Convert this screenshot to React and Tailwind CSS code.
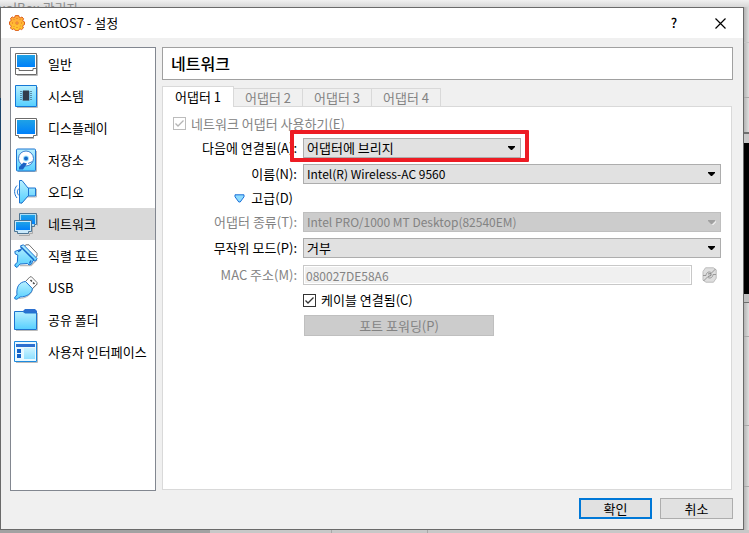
import { useState } from "react";

const FONT = "font-['Noto_Sans_CJK_KR',sans-serif]";

const Gradients = () => (
  <svg width="0" height="0" className="absolute" aria-hidden="true">
    <defs>
      <linearGradient id="screen" x1="0" y1="0" x2="0" y2="1">
        <stop offset="0" stopColor="#1fa2e6" />
        <stop offset="1" stopColor="#0080fa" />
      </linearGradient>
      <linearGradient id="ice" x1="0" y1="0" x2="0" y2="1">
        <stop offset="0" stopColor="#b9f0ff" />
        <stop offset="1" stopColor="#55cfff" />
      </linearGradient>
      <linearGradient id="gear" x1="0" y1="0" x2="0" y2="1">
        <stop offset="0" stopColor="#ffa53c" />
        <stop offset="1" stopColor="#ffcb2e" />
      </linearGradient>
    </defs>
  </svg>
);

const Icon = ({ children }) => (
  <svg width="24" height="24" viewBox="0 0 24 24" fill="none" className="shrink-0" aria-hidden="true">
    {children}
  </svg>
);

const GeneralIcon = () => (
  <Icon>
    <path d="M3 23.500h20.500V3" stroke="#bbb" />
    <path d="M1.500 1.500h21v21h-21z" fill="#fff" stroke="#6b6b6b" />
    <path d="M3 3h18v12H3z" fill="url(#screen)" />
    <path d="M2 16.500h3v2h14v-2h3" stroke="#6b6b6b" />
  </Icon>
);

const SystemIcon = () => (
  <Icon>
    <path d="M3 23.500h20.500V3" stroke="#bbb" />
    <path d="M1.500 1.500h21v21h-21z" fill="url(#ice)" stroke="#1478d6" />
    <path d="M6 7.500h12M6 9.500h12M6 11.500h12M6 13.500h12M6 15.500h12" stroke="#5a8ca8" />
    <path d="M8 7h8v10H8z" fill="#6fb4d8" />
    <path d="M9 6.500h6v10H9z" fill="#323c4b" />
  </Icon>
);

const DisplayIcon = () => (
  <Icon>
    <path d="M5 22.500h15M23.500 4v16" stroke="#bbb" />
    <path d="M1.500 2.500h21v17h-3v2h-15v-2h-3z" fill="#fff" stroke="#6b6b6b" />
    <path d="M3 4h18v14H3z" fill="url(#screen)" />
  </Icon>
);

const StorageIcon = () => (
  <Icon>
    <path d="M4 23.500h18.500V3" stroke="#bbb" />
    <rect x="2.500" y="1" width="19" height="22" rx="1" fill="url(#ice)" stroke="#1d74d0" />
    <circle cx="12" cy="10.500" r="7.500" fill="#fff" stroke="#3a7fd0" />
    <circle cx="12" cy="10.500" r="3" fill="#9fe3ff" />
    <circle cx="12" cy="10.500" r="2" fill="#1668c8" />
    <path d="M13 15.500l-3.500-1-4.500 4.500v2.500h4z" fill="#1a62c4" />
    <path d="M14 15.500l4.500-2" stroke="#3a7fd0" />
  </Icon>
);

const AudioIcon = () => (
  <Icon>
    <path d="M7 24l6-7h9.500v-8" stroke="#bbb" />
    <path d="M5.500 .5h2.500l6 7.500h7.500v8h-7.500l-6 7H5.500z" fill="url(#ice)" stroke="#1d74d0" />
    <path d="M14.500 8v8" stroke="#1d74d0" />
    <path d="M3 5.500C-.2 9-.2 14 3 18M5 8.500c-2.200 2-2.200 5 0 7" stroke="#1d74d0" />
  </Icon>
);

const NetworkIcon = () => (
  <Icon>
    <path d="M23.500 3v10.500M18.500 12v9.500h-3v2H5" stroke="#aaa" />
    <path d="M5.500 1.500h17v11h-2v2h-13v-2h-2z" fill="#a9def8" stroke="#4d7594" />
    <path d="M7 3h14v9H7z" fill="url(#screen)" />
    <path d="M.5 8.500h17v11h-3v2h-11v-2h-3z" fill="#c9e9fb" stroke="#4d7594" />
    <path d="M2 10h14v8H2z" fill="url(#screen)" />
  </Icon>
);

const SerialIcon = () => (
  <Icon>
    <path d="M6 21.500h11l6-6" stroke="#bbb" strokeWidth="1.500" />
    <path d="M10 2.500L12 .8h3l8 8.500v3L21 14z" fill="#fff" stroke="#777" />
    <path
      d="M6.500 1.800L9.500.8 23 14.500l-1.500 2.500-2.500-.5-1.500 3.500-2.500 1-1.500-1.500-7.500.5-3 3.500L.8 22l.5-2 2-1.500.5-7.500-2.500-1L.8 7.500l4-1.500 2.700-.5z"
      fill="url(#ice)" stroke="#1d74d0"
    />
    <path d="M7 3l13 13M4 7.500l3-1.500M15.500 19.500l1.500-3" stroke="#1668c8" strokeWidth="1.500" />
  </Icon>
);

const UsbIcon = () => (
  <Icon>
    <path d="M5 22.500c7 0 13-4 13.500-9.500l5-5" stroke="#bbb" />
    <path d="M11.500 5.500L16 .8h1.500L23 6.500V8l-5 5z" fill="#fff" stroke="#777" />
    <path d="M16.500 4L18 5.500M19 6.500L20.500 8" stroke="#444" strokeWidth="1.500" />
    <path
      d="M11.500 5.500l6.800 7c0 4.500-5.300 8.500-12.300 8.500l-3.200 2.300-2-.5V21L3 19C2 10.500 5.500 6 11.500 5.500z"
      fill="url(#ice)" stroke="#1d74d0"
    />
  </Icon>
);

const FolderIcon = () => (
  <Icon>
    <path d="M2 22.500h21.500V5" stroke="#bbb" />
    <path d="M9 5V3l2-2h10l2 2v2z" fill="#2b70d0" />
    <path d="M.5 3.500H9l2 1.500h11.500v16.500H.5z" fill="url(#ice)" stroke="#1d74d0" />
  </Icon>
);

const InterfaceIcon = () => (
  <Icon>
    <path d="M2 22.500h21.500V3" stroke="#bbb" />
    <path d="M.5 1.500h22v20H.5z" fill="#e8f9ff" stroke="#1d8adf" />
    <path d="M2 4h19v3H2z" fill="#2b70d0" />
    <path d="M3 9h4v4H3zM3 14h4v4H3z" fill="#1262c8" />
    <path d="M10 8h11v11H10z" fill="url(#ice)" opacity=".6" />
  </Icon>
);

const GearIcon = () => (
  <svg width="16" height="16" viewBox="0 0 16 16" aria-hidden="true">
    <path
      d="M6.300 .6h3.400l.6 1.700 1 .4 1.700-.7 1.600 1.700-.8 1.700.4.900 1.300.6v2.700l-1.400.7-.4.900.7 1.800-1.800 1.600-1.500-.7-1 .4-.6 1.300H6.300l-.6-1.300-1-.4-1.600.7L1.500 13l.7-1.700-.4-1L.5 9.600V6.800l1.300-.7.4-1L1.500 3.500l1.700-1.600 1.500.8 1-.4z"
      fill="url(#gear)" stroke="#dd5f1c"
    />
    <circle cx="8" cy="8" r="1.500" fill="#e0601c" />
    <circle cx="8" cy="8" r=".7" fill="#ffd98a" />
    <path
      d="M7.500 3.500h1M7.500 12.500h1M3.500 7.500v1M12.500 7.500v1M4.500 5l.7-.7M11.500 5l-.7-.7M4.500 11l.7.7M11.500 11l-.7.7"
      stroke="#e8701c" fill="none"
    />
  </svg>
);

const RefreshIcon = () => (
  <svg width="15" height="16" viewBox="0 0 15 16" fill="none" aria-hidden="true">
    <path d="M3.500 .8h8l2.700 2v8.400l-2.700 4H4l-3-2V4.500z" fill="#dedede" stroke="#bcbcbc" />
    <path d="M1 8.500h3c.3-3.500 3.500-4.500 5.500-2.500l4-4M14 7.500h-3c-.3 3.500-3.500 4.500-5.500 2.500l-4 4" stroke="#989898" />
    <path d="M6 7l3-.5v2l-3 1" stroke="#858585" />
  </svg>
);

const SECTIONS = [
  { name: "일반", icon: GeneralIcon },
  { name: "시스템", icon: SystemIcon },
  { name: "디스플레이", icon: DisplayIcon },
  { name: "저장소", icon: StorageIcon },
  { name: "오디오", icon: AudioIcon },
  { name: "네트워크", icon: NetworkIcon },
  { name: "직렬 포트", icon: SerialIcon },
  { name: "USB", icon: UsbIcon },
  { name: "공유 폴더", icon: FolderIcon },
  { name: "사용자 인터페이스", icon: InterfaceIcon },
];

const TABS = ["어댑터 1", "어댑터 2", "어댑터 3", "어댑터 4"];

function Select({ id, value, disabled, small, children }) {
  return (
    <div className="relative">
      <select
        id={id}
        disabled={disabled}
        className={
          "block w-full h-5 pl-[3px] pr-5 border appearance-none opacity-100 leading-[18px] " +
          (small ? "text-xs leading-[18px] " : "") +
          (disabled ? "bg-[#cccccc] border-[#bfbfbf] text-[#838383]" : "bg-[#e1e1e1] border-[#adadad] text-black")
        }
      >
        <option>{value}</option>
      </select>
      <svg width="9" height="5" viewBox="0 0 9 5" className="absolute right-[5px] top-2 pointer-events-none" aria-hidden="true">
        {disabled && <path d="M2 5h3l4-4v1L6 5z" fill="#fff" />}
        <path d="M1 0h7v1L5 4H4L1 1z" fill={disabled ? "#a0a0a0" : "#000"} />
      </svg>
      {children}
    </div>
  );
}

function Checkbox({ label, disabled }) {
  return (
    <label className={"flex items-center gap-[5px] " + (disabled ? "text-[#838383]" : "text-black")}>
      <span className="relative flex">
        <input
          type="checkbox"
          defaultChecked
          disabled={disabled}
          className={"peer size-[13px] appearance-none border bg-white " + (disabled ? "border-[#bcbcbc]" : "border-[#333]")}
        />
        <svg width="13" height="13" viewBox="0 0 13 13" fill="none" className="absolute inset-0 hidden peer-checked:block pointer-events-none" aria-hidden="true">
          <path d="M2.500 6.500L5 9l5.500-5.500" stroke={disabled ? "#b4b4b4" : "#333"} strokeWidth="1.300" />
        </svg>
      </span>
      {label}
    </label>
  );
}

// label column on the left, control on the right
function Row({ label, htmlFor, disabled, children }) {
  return (
    <div className="grid grid-cols-[134px_1fr] gap-x-1.5 items-center">
      <label htmlFor={htmlFor} className={"text-right whitespace-nowrap " + (disabled ? "text-[#838383]" : "text-black")}>
        {label}
      </label>
      {children}
    </div>
  );
}

function AdapterForm() {
  return (
    <div className="flex flex-col gap-1.5 pt-2 pr-2.5">
      <div className="flex items-center h-[17px] pl-2.5">
        <Checkbox label="네트워크 어댑터 사용하기(E)" disabled />
      </div>
      <Row label="다음에 연결됨(A):" htmlFor="attached">
        <div className="w-[218px]">
          <Select id="attached" value="어댑터에 브리지">
            <div className="absolute -left-[13px] -top-2 -right-2 -bottom-1 border-4 border-[#ed1c24] rounded-[1px] pointer-events-none" />
          </Select>
        </div>
      </Row>
      <Row label="이름(N):" htmlFor="name">
        <Select id="name" value="Intel(R) Wireless-AC 9560" small />
      </Row>
      <div className="w-[134px] h-4 flex justify-end pr-1">
        <button className="flex items-center gap-1.5">
          <svg width="11" height="9" viewBox="0 0 11 9" aria-hidden="true">
            <path d="M1 .8h9v2L6.200 8H4.800L1 2.800z" fill="#8fdcff" stroke="#1a6fd8" />
          </svg>
          고급(D)
        </button>
      </div>
      <Row label="어댑터 종류(T):" htmlFor="kind" disabled>
        <Select id="kind" value="Intel PRO/1000 MT Desktop(82540EM)" small disabled />
      </Row>
      <Row label="무작위 모드(P):" htmlFor="promiscuous">
        <Select id="promiscuous" value="거부" />
      </Row>
      <Row label="MAC 주소(M):" htmlFor="mac" disabled>
        <div className="flex items-end h-[21px] gap-2.5">
          <input
            id="mac"
            disabled
            defaultValue="080027DE58A6"
            className="flex-1 min-w-0 h-5 pl-0.5 text-xs border border-[#c8c8c8] bg-[#f0f0f0] text-[#838383] shadow-[inset_0_0_0_1px_white]"
          />
          <button disabled aria-label="새로 고침" className="w-[19px] h-5 flex items-center">
            <RefreshIcon />
          </button>
        </div>
      </Row>
      <div className="flex items-center h-[18px] pl-[140px]">
        <Checkbox label="케이블 연결됨(C)" />
      </div>
      <div className="pl-[141px]">
        <button disabled className="block w-[190px] h-[21px] leading-[19px] bg-[#cccccc] border border-[#bfbfbf] text-[#838383]">
          포트 포워딩(P)
        </button>
      </div>
    </div>
  );
}

function Dialog() {
  const [section, setSection] = useState(5);
  const [tab, setTab] = useState(0);

  return (
    <div className="flex-1 min-w-0 flex flex-col bg-[#f0f0f0] border-y border-r border-[#6a6a6a]">
      <header className="flex items-center h-[30px] pl-2 bg-white">
        <GearIcon />
        <h1 className="ml-1.5 flex-1 text-[13px] leading-4">CentOS7 - 설정</h1>
        <button aria-label="도움말" className="w-[46px] h-full text-[13px] font-medium">?</button>
        <button aria-label="닫기" className="w-[46px] h-full flex items-center justify-center">
          <svg width="11" height="11" viewBox="0 0 11 11" aria-hidden="true">
            <path d="M.5 .5l10 10M10.500 .5l-10 10" stroke="#000" strokeWidth="1.200" />
          </svg>
        </button>
      </header>

      <div className="flex flex-1 gap-1.5 pt-[9px] pl-[9px] pr-2.5">
        <nav className="w-[146px] shrink-0 bg-white border border-[#828790]">
          {SECTIONS.map(({ name, icon: SectionIcon }, i) => (
            <button
              key={name}
              onClick={() => setSection(i)}
              className={"flex items-center gap-2.5 w-full h-8 pl-[3px] whitespace-nowrap " + (i === section ? "bg-[#d9d9d9]" : "")}
            >
              <SectionIcon />
              {name}
            </button>
          ))}
        </nav>

        <main className="flex-1 min-w-0 flex flex-col pb-px">
          <h2 className="h-[33px] pl-2 text-base leading-[30px] font-medium bg-white border border-[#a0a0a0]">
            {SECTIONS[section].name}
          </h2>
          <div role="tablist" className="flex items-end h-5 mt-1.5 text-[#838383]">
            {TABS.map((name, i) => (
              <button
                key={name}
                role="tab"
                aria-selected={i === tab}
                onClick={() => setTab(i)}
                className={
                  "border border-[#d9d9d9] border-b-0 " +
                  (i === tab ? "w-[72px] h-5 leading-[17px] bg-white text-black" : "w-[69px] h-[18px] leading-4 border-l-0 bg-[#f0f0f0]")
                }
              >
                {name}
              </button>
            ))}
          </div>
          <div className="flex-1 flex flex-col mr-px bg-white border border-[#d9d9d9] border-t-0">
            <div className="h-px ml-[70px] bg-[#d9d9d9]" />
            <AdapterForm />
          </div>
        </main>
      </div>

      <footer className="flex justify-end gap-2 pt-[7px] pb-2.5 pr-2.5">
        <button className="w-[73px] h-[21px] leading-[17px] bg-[#e1e1e1] border-2 border-[#0078d7]">확인</button>
        <button className="w-[73px] h-[21px] leading-[19px] bg-[#e1e1e1] border border-[#adadad]">취소</button>
      </footer>
    </div>
  );
}

export default function App() {
  return (
    <div className={"min-h-screen flex flex-col bg-[#dcdcdc] text-[13px] leading-4 text-black " + FONT}>
      <Gradients />
      {/* title of the manager window, half hidden behind the dialog */}
      <div className="h-[7px] overflow-hidden bg-linear-to-b from-[#f0f0f0] to-[#d8d8d8] text-[#8c8c8c]">
        <div className="-ml-0.5">ualBox 관리자</div>
      </div>

      <div className="flex-1 flex">
        <div className="w-px flex flex-col bg-[#6a6a6a]">
          <div className="h-[52px] mt-[91px] bg-[#1d4468]" />
        </div>
        <Dialog />
        {/* windows behind the dialog */}
        <div className="w-[5px] flex flex-col bg-linear-to-r from-[#b4b4b4] to-[#dedede]">
          <div className="h-9 border-b border-[#c4c4c4]" />
          <div className="h-[55px] border-b border-[#a8a8a8]" />
          <div className="h-9 border-b-2 border-[#6e6e6e]" />
          <div className="h-[9px] bg-[#c8c8c8]" />
          <div className="h-[151px] bg-black" />
          <div className="h-[9px] bg-[#c0c0c0] border-b border-[#6e6e6e]" />
          <div className="h-[34px] border-b border-[#a8a8a8]" />
          <div className="h-[89px] border-b border-[#a8a8a8]" />
          <div className="h-[61px] border-b border-[#a8a8a8]" />
        </div>
      </div>

      <div className="h-[3px] flex">
        <div className="w-[210px] bg-[#a2a2a2]" />
        <div className="w-[122px] bg-[#c8c8c8] border-r border-[#a8a8a8]" />
        <div className="w-24 bg-[#c8c8c8] border-r border-[#a8a8a8]" />
        <div className="flex-1 bg-[#c8c8c8]" />
      </div>
    </div>
  );
}
